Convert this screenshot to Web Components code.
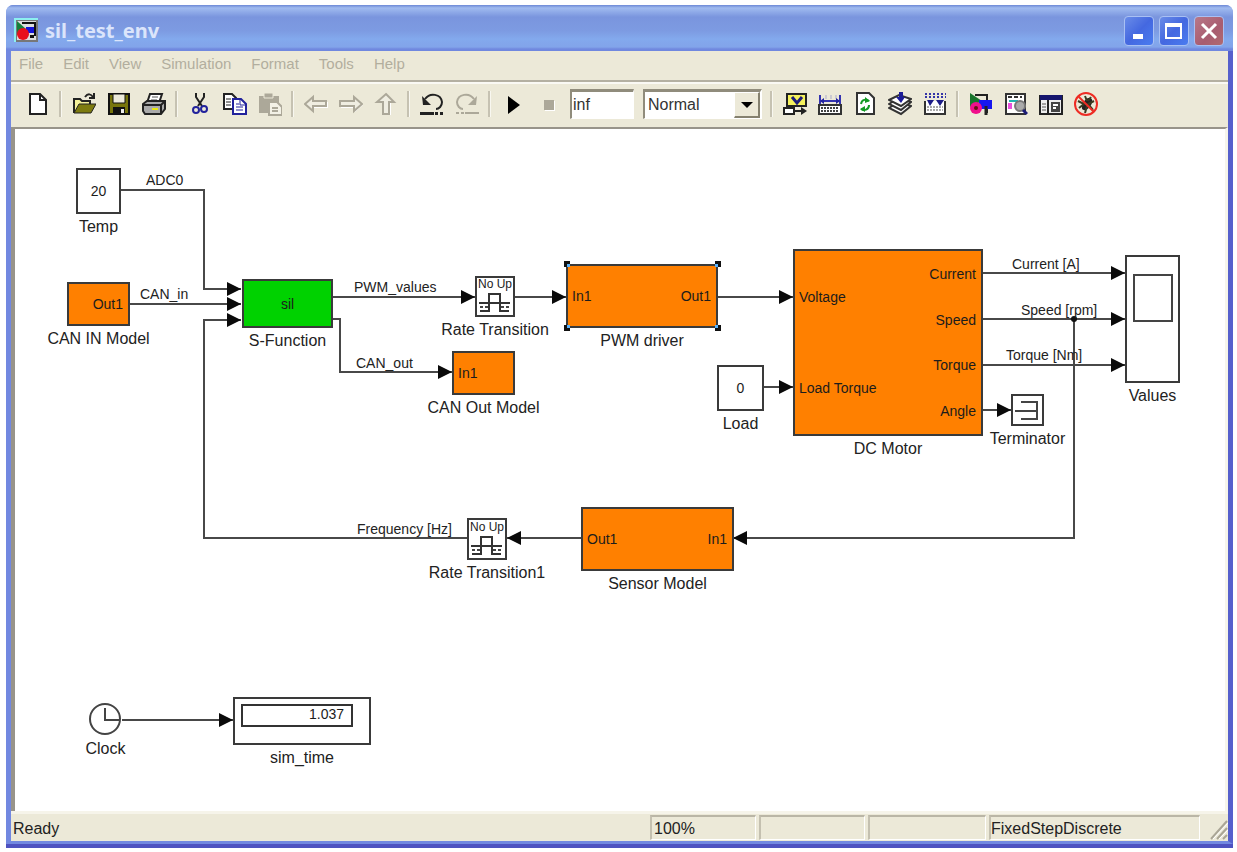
<!DOCTYPE html>
<html lang="en">
<head>
<meta charset="utf-8">
<title>sil_test_env</title>
<style>
  body { margin: 0; min-height: 100vh; box-sizing: border-box; padding: 5px 4px 4px 6px; display: flex; background: #fff; color: #222; font: 16px/18px "Liberation Sans", Arial, sans-serif; }
</style>
</head>
<body>
<xp-window></xp-window>
<script>
class Part extends HTMLElement {
  constructor() {
    super();
    this.attachShadow({ mode: "open" });
    const t = document.createElement("template");
    t.innerHTML = this.markup();
    this.shadowRoot.append(t.content.cloneNode(true));
  }
  markup() { return ""; }
}

const ICONS = {
  model: `<path d="M0 0h24v24H0z" fill="#8df0f0"/><path d="M2 2h22v22H2z" fill="#777"/><path d="M3 3h19v19H3z" fill="#ddd"/><path d="M3 3l9 8-9 6z" fill="#15803a"/><path d="M8 5h13v13" fill="none" stroke="#111" stroke-width="2"/><path d="M12 9h8v6h-8z" fill="#1414d8"/><circle cx="9" cy="16" r="6" fill="#e8101c"/><path d="M16 17h4v3h-4z" fill="#111"/>`,
  new: `<path d="M4 2h10l6 6v14H4z" fill="#fff" stroke="#222" stroke-width="2"/><path d="M14 2v6h6" fill="none" stroke="#222" stroke-width="2"/>`,
  open: `<path d="M2 21V7h6l2 2h8v4" fill="#f4f19a" stroke="#222" stroke-width="2"/><path d="M2 21l5-9h17l-5 9z" fill="#7d7b10" stroke="#222" stroke-width="1"/><path d="M13 5c3-4 6-3 8 0M22 1v5h-5" fill="none" stroke="#222" stroke-width="2"/>`,
  save: `<path d="M2 2h20v20H2z" fill="#77750c" stroke="#111" stroke-width="2"/><path d="M6 2h12v9H6z" fill="#eceada" stroke="#111"/><path d="M6 15h12v7H6z" fill="#111"/><path d="M14 17h3v4h-3z" fill="#eee"/>`,
  print: `<path d="M8 2h12l-3 9H5z" fill="#fff" stroke="#222" stroke-width="2"/><path d="M10 5h6M9 8h6" stroke="#555"/><path d="M1 12l4-3h18v8l-4 5H3l-2-3z" fill="#aaa" stroke="#222" stroke-width="2"/><path d="M1 13h18v8M19 13l4-4" fill="none" stroke="#222" stroke-width="2"/><path d="M10 16h6v2h-6z" fill="#eaea10"/>`,
  cut: `<path d="M8 1v4l6 9M16 1v4l-6 9" fill="none" stroke="#222" stroke-width="2"/><circle cx="8" cy="18" r="3" fill="none" stroke="#22229c" stroke-width="2"/><circle cx="16" cy="17" r="3" fill="none" stroke="#22229c" stroke-width="2"/>`,
  copy: `<path d="M1 2h8l4 4v11H1z" fill="#fff" stroke="#222" stroke-width="2"/><path d="M3 7h5M3 10h5M3 13h5" stroke="#222"/><path d="M10 7h8l5 5v10H10z" fill="#fff" stroke="#22229c" stroke-width="2"/><path d="M17 7v6h6M13 12h3M13 15h7M13 18h7" fill="none" stroke="#22229c"/>`,
  paste: `<path d="M1 4h20v17H1z" fill="#aca899"/><path d="M6 1h9v5H6z" fill="#aca899" stroke="#ece9d8"/><path d="M11 10h8l5 5v8H11z" fill="#f3f1e6" stroke="#aca899" stroke-width="2"/><path d="M14 16h6M14 19h6" stroke="#aca899" stroke-width="2"/>`,
  back: `<path d="M2 13l8-7v4h14v6H10v4z" fill="#fff"/><path d="M1 12l8-7v4h13v5H9v5z" fill="#f0eee2" stroke="#aca899" stroke-width="2"/>`,
  forward: `<path d="M24 13l-8-7v4H2v6h14v4z" fill="#fff"/><path d="M23 12l-8-7v4H1v5h14v5z" fill="#f0eee2" stroke="#aca899" stroke-width="2"/>`,
  up: `<path d="M13 2l9 9h-5v12h-7V11H4z" fill="#fff"/><path d="M12 2l8 8h-5v12H9V10H3z" fill="#f0eee2" stroke="#aca899" stroke-width="2"/>`,
  undo: `<path d="M5 7c5-7 16-5 17 3 0 4-3 7-6 7" fill="none" stroke="#222" stroke-width="2"/><path d="M2 4l1 9h8z" fill="#222"/><path d="M0 20h14v3H0zM15 20h3v3h-3zM20 20h3v3h-3z" fill="#222"/>`,
  redo: `<path d="M19 7C14 0 3 2 2 10c0 4 3 7 6 7" fill="none" stroke="#aca899" stroke-width="2"/><path d="M22 4l-1 9h-8z" fill="#aca899"/><path d="M10 20h14v2H10zM6 20h3v2H6zM1 20h3v2H1z" fill="#aca899"/>`,
  play: `<path d="M7 4l12 9-12 9z" fill="#000"/>`,
  stop: `<path d="M9 9h10v10H9z" fill="#fff"/><path d="M8 8h10v10H8z" fill="#aca899"/>`,
  normal: `<path d="M4 2h19v12H4z" fill="#f6f25c" stroke="#222" stroke-width="2"/><path d="M9 5l5 6 5-6" fill="none" stroke="#1c1c78" stroke-width="3"/><path d="M1 16h10v6H1z" fill="#fff" stroke="#222" stroke-width="2"/><path d="M11 19h9" stroke="#222" stroke-width="2"/><path d="M18 15l6 4-6 4z" fill="#222"/>`,
  ruler: `<path d="M2 3v9M22 3v9M2 9h20" fill="none" stroke="#3434b0" stroke-width="2"/><path d="M8 3v4M13 3v4M18 3v4" stroke="#a9a9cc" stroke-width="1"/><path d="M2 9l4-3v6zM22 9l-4-3v6z" fill="#2424a0"/><path d="M1 13h22v9H1z" fill="#fff" stroke="#333" stroke-width="2"/><path d="M3 16h18M3 19h18" stroke="#444" stroke-width="2" stroke-dasharray="2 1"/>`,
  refresh: `<path d="M4 1h12l5 5v16H4z" fill="#fff" stroke="#333" stroke-width="2"/><path d="M8 12c1-5 5-5 8-3M16 13c0 5-5 6-8 4" fill="none" stroke="#149a24" stroke-width="2"/><path d="M12 5l5 4-5 2zM12 14l-5 3 5 3z" fill="#149a24"/>`,
  build: `<path d="M1 16l10-6 12 4-10 8z" fill="#fff" stroke="#333" stroke-width="2"/><path d="M1 12l10-6 12 4-10 8z" fill="#fff" stroke="#333" stroke-width="2"/><path d="M1 8l10-5 12 4-10 7z" fill="#fff" stroke="#333" stroke-width="2"/><path d="M13 0v6" stroke="#1c1c98" stroke-width="4"/><path d="M8 5h9l-4 6z" fill="#1c1c98"/>`,
  buildsub: `<path d="M2 2h21M2 5h21" stroke="#3434a8" stroke-width="2" stroke-dasharray="2 2"/><path d="M2 9v13h20V9" fill="#fff" stroke="#333" stroke-width="2"/><path d="M4 15h16M4 18h16" stroke="#555" stroke-dasharray="2 1"/><path d="M4 8h7l-4 6zM13 8h8l-4 6z" fill="#1c1c88"/>`,
  library: `<path d="M1 1l12 8-12 6z" fill="#18752c"/><path d="M6 3h12v18" fill="none" stroke="#222" stroke-width="2"/><path d="M10 8h13v9H10z" fill="#1616ee"/><circle cx="7" cy="16" r="6" fill="#f0108c"/><circle cx="7" cy="16" r="2" fill="#611"/><path d="M17 14v9" stroke="#222" stroke-width="3"/>`,
  explorer: `<path d="M2 2h19v20H2z" fill="#fff" stroke="#333" stroke-width="2"/><path d="M4 5h14" stroke="#333" stroke-width="2" stroke-dasharray="4 2"/><path d="M5 9h9" stroke="#20b4b0" stroke-width="2"/><path d="M4 11h4v6H4z" fill="#e850dc"/><circle cx="16" cy="14" r="5" fill="#aaa" stroke="#777" stroke-width="2"/><path d="M19 18l4 4" stroke="#1c1c78" stroke-width="3"/>`,
  browser: `<path d="M1 4h22v18H1z" fill="#eee" stroke="#222" stroke-width="2"/><path d="M1 3h22v5H1z" fill="#16166e"/><path d="M9 8v14" stroke="#222" stroke-width="2"/><path d="M3 12h4M3 15h4M3 18h4" stroke="#555"/><path d="M12 10h9v10h-9z" fill="#444"/><path d="M14 13h5M14 16h3" stroke="#fff" stroke-width="2"/>`,
  debug: `<ellipse cx="13" cy="12" rx="4" ry="7" transform="rotate(35 13 12)" fill="#222"/><path d="M4 9l6 3-5 4M11 4l2 5M20 9l-6 3 5 6M13 14l-2 7M17 5l-3 4" fill="none" stroke="#3a3a20" stroke-width="2"/><circle cx="12" cy="12" r="11" fill="none" stroke="#ee2c24" stroke-width="2"/><path d="M4 4l16 16" stroke="#ee2c24" stroke-width="2"/>`
};

customElements.define("xp-icon", class extends Part {
  markup() {
    return `<style>:host{display:block;width:24px;height:24px}svg{display:block;width:100%;height:100%}</style>
    <svg viewBox="0 0 24 24" aria-hidden="true"></svg>`;
  }
  connectedCallback() { this.shadowRoot.querySelector("svg").innerHTML = ICONS[this.getAttribute("name")] || ""; }
});

customElements.define("title-bar", class extends Part {
  markup() {
    return `<style>
      :host{display:flex;align-items:center;height:46px;box-sizing:border-box;padding:5px 9px 0 8px;gap:7px;border-radius:7px 7px 0 0;
        background:linear-gradient(#6c88d6 0,#a1bbef 3px,#93aeea 6px,#7a95de 12px,#7d9be2 26px,#83a9ed 34px,#82a4ea 42px,#7088df 44px,#7088df 46px)}
      xp-icon{margin-top:-2px}
      h1{margin:0;flex:1;color:#dbe5fb;font:bold 20px/24px "Noto Sans",sans-serif}
      .controls{display:flex;gap:5px}
      button{width:30px;height:30px;padding:0;border:1px solid #a9c0f3;border-radius:4px;background:linear-gradient(135deg,#6a8ce8,#4468e0 50%,#4a7cf0);display:grid;place-items:center}
      .close{background:linear-gradient(135deg,#b87888,#a85c70 60%,#b06a70)}
      svg{width:22px;height:22px;display:block}
    </style>
    <xp-icon name="model"></xp-icon><h1><slot></slot></h1>
    <div class="controls">
      <button aria-label="Minimize"><svg viewBox="0 0 22 22"><path d="M5 14h10v5H5z" fill="#fff"/></svg></button>
      <button aria-label="Maximize"><svg viewBox="0 0 22 22"><path d="M3 4h15v14H3z" fill="none" stroke="#fff" stroke-width="2"/><path d="M2 3h17v4H2z" fill="#fff"/></svg></button>
      <button class="close" aria-label="Close"><svg viewBox="0 0 22 22"><path d="M4 4l14 14M18 4L4 18" stroke="#fff" stroke-width="3"/></svg></button>
    </div>`;
  }
});

customElements.define("menu-bar", class extends Part {
  markup() {
    return `<style>
      :host{display:flex;height:29px;background:#ece9d8;border-bottom:2px solid #b4b0a2}
      button{border:0;background:none;padding:0 12px 4px 8px;font:15px/18px "Liberation Sans",Arial,sans-serif;color:#b2ae9e}
    </style>` + ["File","Edit","View","Simulation","Format","Tools","Help"].map(n => `<button>${n}</button>`).join("");
  }
});

customElements.define("tool-bar", class extends Part {
  markup() {
    const b = (...n) => n.map(i => `<button aria-label="${i}"><xp-icon name="${i}"></xp-icon></button>`).join("");
    const sep = `<i></i>`;
    return `<style>
      :host{display:flex;align-items:center;height:45px;padding:0 0 3px 9px;box-sizing:border-box;background:#ece9d8;border-top:2px solid #faf9f4}
      button{flex:none;width:35px;height:30px;padding:0;border:0;background:none;display:grid;place-items:center}
      i{flex:none;width:2px;height:26px;margin:0 4px;background:#c6c2b2;border-right:1px solid #f8f7f0}
      input{flex:none;width:64px;height:30px;box-sizing:border-box;margin:0 9px 0 5px;padding:0 0 0 1px;border:solid;border-width:3px 1px 1px 2px;border-color:#908c7c #fff #fff #908c7c;background:#fff;color:#333;font:16px/18px "Liberation Sans",Arial,sans-serif}
      .pick{flex:none;display:grid;width:119px;height:30px;box-sizing:border-box;border:solid;border-width:3px 2px 1px 2px;border-color:#908c7c #fff #fff #908c7c;background:#fff;margin-right:4px}
      .pick>*{grid-area:1/1}
      select{appearance:none;width:100%;border:0;padding:0 24px 0 3px;background:none;color:#333;font:16px/18px "Liberation Sans",Arial,sans-serif;margin:0}
      .arrow{justify-self:end;width:26px;box-sizing:border-box;background:#ece9d8;border:solid;border-width:1px 2px 2px 1px;border-color:#fff #85816f #85816f #fff;display:grid;place-items:center;pointer-events:none}
      .arrow svg{width:12px;height:8px}
    </style>
    ${b("new")}${sep}${b("open","save","print")}${sep}${b("cut","copy","paste")}${sep}${b("back","forward","up")}${sep}${b("undo","redo")}${sep}${b("play","stop")}
    <input aria-label="Stop time" value="inf">
    <div class="pick"><select aria-label="Simulation mode"><option>Normal</option></select><span class="arrow"><svg viewBox="0 0 12 8"><path d="M0 1h12L6 7z" fill="#000"/></svg></span></div>
    ${sep}${b("normal","ruler","refresh","build","buildsub")}${sep}${b("library","explorer","browser","debug")}`;
  }
});

customElements.define("status-bar", class extends Part {
  markup() {
    return `<style>
      :host{display:flex;align-items:center;gap:3px;height:30px;box-sizing:border-box;border-top:3px solid #f6f4ea;background:#ece9d8;padding:1px 0 1px 1px}
      span{box-sizing:border-box;height:25px;line-height:24px;padding-left:2px;border:solid;border-width:2px 1px 1px 2px;border-color:#bab6a6 #fff #fff #c4c0b0;white-space:nowrap}
      .ready{flex:1;border-color:transparent;border-left:0;padding-left:1px}
      .a{width:106px}.c{width:118px}.d{width:211px;padding-left:0}
      svg{width:25px;height:25px}
    </style>
    <span class="ready">Ready</span><span class="a">100%</span><span class="a"></span><span class="c"></span><span class="d">FixedStepDiscrete</span>
    <svg viewBox="3 0 25 25"><path d="M11 24L27 6M17 24L27 13M23 24l4-4" stroke="#aaa696" stroke-width="2"/><path d="M13 24L28 8M19 24l9-9" stroke="#fff"/></svg>`;
  }
});

/* A block on the model canvas: inputs on the left, outputs on the right, name below. */
customElements.define("sim-block", class extends Part {
  markup() {
    return `<style>
      :host{position:absolute;box-sizing:border-box}
      .box{height:100%;box-sizing:border-box;border:2px solid #3a3a3a;background:var(--fill,#fff);display:flex;justify-content:space-between;position:relative;font-size:14px;line-height:16px;color:#1c1c1c}
      :host([shape=round]) .box{border:0;background:none}
      .in,.out{display:flex;flex-direction:column;justify-content:space-around;padding:0 4px;white-space:nowrap}
      .out{text-align:right;padding-right:5px}
      .body{flex:1;display:grid;place-items:center}
      .name{position:absolute;top:100%;left:50%;transform:translateX(-50%);padding-top:4px;white-space:nowrap;line-height:18px;font-size:16px}
      .handle{display:none;position:absolute;width:6px;height:6px;background:#111;z-index:1}
      .handle::after{content:"";position:absolute;width:3px;height:3px;background:#5ab4ff}
      :host([selected]) .handle{display:block}
      .tl{left:-2px;top:-3px}.tr{right:-3px;top:-3px}.bl{left:-2px;bottom:-3px}.br{right:-3px;bottom:-3px}
      .tl::after{right:0;bottom:0}.tr::after{left:0;bottom:0}.bl::after{right:0;top:0}.br::after{left:0;top:0}
    </style>
    <div class="box"><div class="in"></div><div class="body"><slot></slot></div><div class="out"></div></div>
    <b class="handle tl"></b><b class="handle tr"></b><b class="handle bl"></b><b class="handle br"></b>
    <div class="name"></div>`;
  }
  connectedCallback() {
    const g = n => this.getAttribute(n) || "", r = this.shadowRoot;
    const [x, y, w, h] = g("at").split(" ");
    Object.assign(this.style, { left: x + "px", top: y + "px", width: w + "px", height: h + "px" });
    r.querySelector(".name").textContent = g("name");
    for (const side of ["in", "out"]) {
      const names = g(side).split(",").filter(Boolean);
      r.querySelector("." + side).append(...names.map(n => Object.assign(document.createElement("span"), { textContent: n })));
      if (!names.length) r.querySelector("." + side).remove();
    }
  }
});

customElements.define("signal-label", class extends Part {
  markup() { return `<style>:host{position:absolute;font-size:14px;line-height:16px;white-space:nowrap}</style><slot></slot>`; }
  connectedCallback() {
    const [x, y] = this.getAttribute("at").split(" ");
    this.style.left = x + "px"; this.style.top = y + "px";
  }
});

customElements.define("signal-wires", class extends Part {
  markup() {
    const wires = ["106,61 189,61 189,160 226,160","115,175 226,175","452,409 189,409 189,191 226,191","318,168 460,168","500,168 551,168","318,190 325,190 325,243 437,243","703,168 778,168","749,258 778,258","968,144 1110,144","968,190 1110,190","968,236 1110,236","968,281 996,281","1059,190 1059,409 718,409","566,409 492,409","107,591 218,591"];
    return `<style>:host{position:absolute;inset:0}svg{width:100%;height:100%;display:block}polyline{fill:none;stroke:#484848;stroke-width:2;shape-rendering:crispEdges;marker-end:url(#head)}</style>
    <svg aria-hidden="true"><defs><marker id="head" markerUnits="userSpaceOnUse" markerWidth="14" markerHeight="14" refX="14" refY="7" orient="auto"><path d="M0 0l14 7-14 7z" fill="#0a0a0a"/></marker></defs>
    ${wires.map(p => `<polyline points="${p}"/>`).join("")}<circle cx="1059" cy="190" r="3" fill="#111"/></svg>`;
  }
});

customElements.define("rate-glyph", class extends Part {
  markup() {
    return `<style>:host{display:block;width:36px;height:37px}span{display:block;text-align:center;font-size:12px;line-height:13px;white-space:nowrap}svg{display:block}</style>
    <span>No Up</span><svg width="36" height="24" viewBox="0 0 36 24"><path d="M2 12h31" stroke="#333" stroke-width="2"/><path d="M3 20h9V3h11v17h9" fill="none" stroke="#333" stroke-width="2"/><path d="M3 16h8M24 16h8" stroke="#444" stroke-width="2" stroke-dasharray="3 2"/></svg>`;
  }
});

customElements.define("scope-glyph", class extends Part {
  markup() { return `<style>:host{display:block;align-self:start;margin-top:17px;width:40px;height:48px;box-sizing:border-box;border:2px solid #444}</style>`; }
});
customElements.define("terminator-glyph", class extends Part {
  markup() { return `<style>:host,svg{display:block}</style><svg width="29" height="28" viewBox="0 0 29 28"><path d="M8 6h16v17H8M2 15h22" fill="none" stroke="#444" stroke-width="2"/></svg>`; }
});
customElements.define("clock-glyph", class extends Part {
  markup() { return `<style>:host,svg{display:block}</style><svg width="33" height="33" viewBox="0 0 33 33"><circle cx="16" cy="16" r="15" fill="#fff" stroke="#444" stroke-width="2"/><path d="M16 5v12h15" fill="none" stroke="#444" stroke-width="2"/></svg>`; }
});
customElements.define("display-glyph", class extends Part {
  markup() { return `<style>:host{display:block;justify-self:start;align-self:start;margin:5px 0 0 6px;width:112px;height:23px;box-sizing:border-box;border:2px solid #333;padding-right:7px;text-align:right;line-height:16px}</style><slot></slot>`; }
});

customElements.define("model-canvas", class extends Part {
  markup() {
    return `<style>
      :host{display:block;position:relative;flex:1;min-height:640px;overflow:hidden;background:#fff;border-left:4px solid #98948a;border-top:2px solid #98948a;border-right:3px solid #f6f4ea}
      .orange{--fill:#ff8000}.green{--fill:#00d200}
    </style>
    <signal-wires></signal-wires>
    <sim-block at="61 39 45 46" name="Temp">20</sim-block>
    <sim-block class="orange" at="52 153 63 44" name="CAN IN Model" out="Out1"></sim-block>
    <sim-block class="green" at="227 150 91 49" name="S-Function">sil</sim-block>
    <sim-block at="460 147 40 41" name="Rate Transition"><rate-glyph></rate-glyph></sim-block>
    <sim-block class="orange" selected at="551 135 152 64" name="PWM driver" in="In1" out="Out1"></sim-block>
    <sim-block class="orange" at="437 222 63 44" name="CAN Out Model" in="In1"></sim-block>
    <sim-block class="orange" at="778 120 190 187" name="DC Motor" in="Voltage,Load Torque" out="Current,Speed,Torque,Angle"></sim-block>
    <sim-block at="702 236 47 46" name="Load">0</sim-block>
    <sim-block at="996 265 33 32" name="Terminator"><terminator-glyph></terminator-glyph></sim-block>
    <sim-block at="1110 126 55 128" name="Values"><scope-glyph></scope-glyph></sim-block>
    <sim-block at="452 389 40 42" name="Rate Transition1"><rate-glyph></rate-glyph></sim-block>
    <sim-block class="orange" at="566 378 153 64" name="Sensor Model" in="Out1" out="In1"></sim-block>
    <sim-block shape="round" at="74 574 33 33" name="Clock"><clock-glyph></clock-glyph></sim-block>
    <sim-block at="218 568 138 48" name="sim_time"><display-glyph>1.037</display-glyph></sim-block>
    <signal-label at="131 43">ADC0</signal-label>
    <signal-label at="125 157">CAN_in</signal-label>
    <signal-label at="339 150">PWM_values</signal-label>
    <signal-label at="341 226">CAN_out</signal-label>
    <signal-label at="997 127">Current [A]</signal-label>
    <signal-label at="1006 173">Speed [rpm]</signal-label>
    <signal-label at="991 218">Torque [Nm]</signal-label>
    <signal-label at="342 392">Frequency [Hz]</signal-label>`;
  }
});

customElements.define("xp-window", class extends Part {
  markup() {
    return `<style>
      :host{flex:1;min-width:0;display:flex;flex-direction:column;border-radius:8px 8px 0 0;background:#7088df;border-bottom:4px solid #4e52c0}
      .frame{flex:1;display:flex;flex-direction:column;border:solid;border-width:0 5px 3px 5px;border-color:#7288e0 #5660cc #7288e0 #7288e0;overflow:hidden;background:#ece9d8}
    </style>
    <title-bar>sil_test_env</title-bar>
    <div class="frame"><menu-bar></menu-bar><tool-bar></tool-bar><model-canvas></model-canvas><status-bar></status-bar></div>`;
  }
});
</script>
</body>
</html>
